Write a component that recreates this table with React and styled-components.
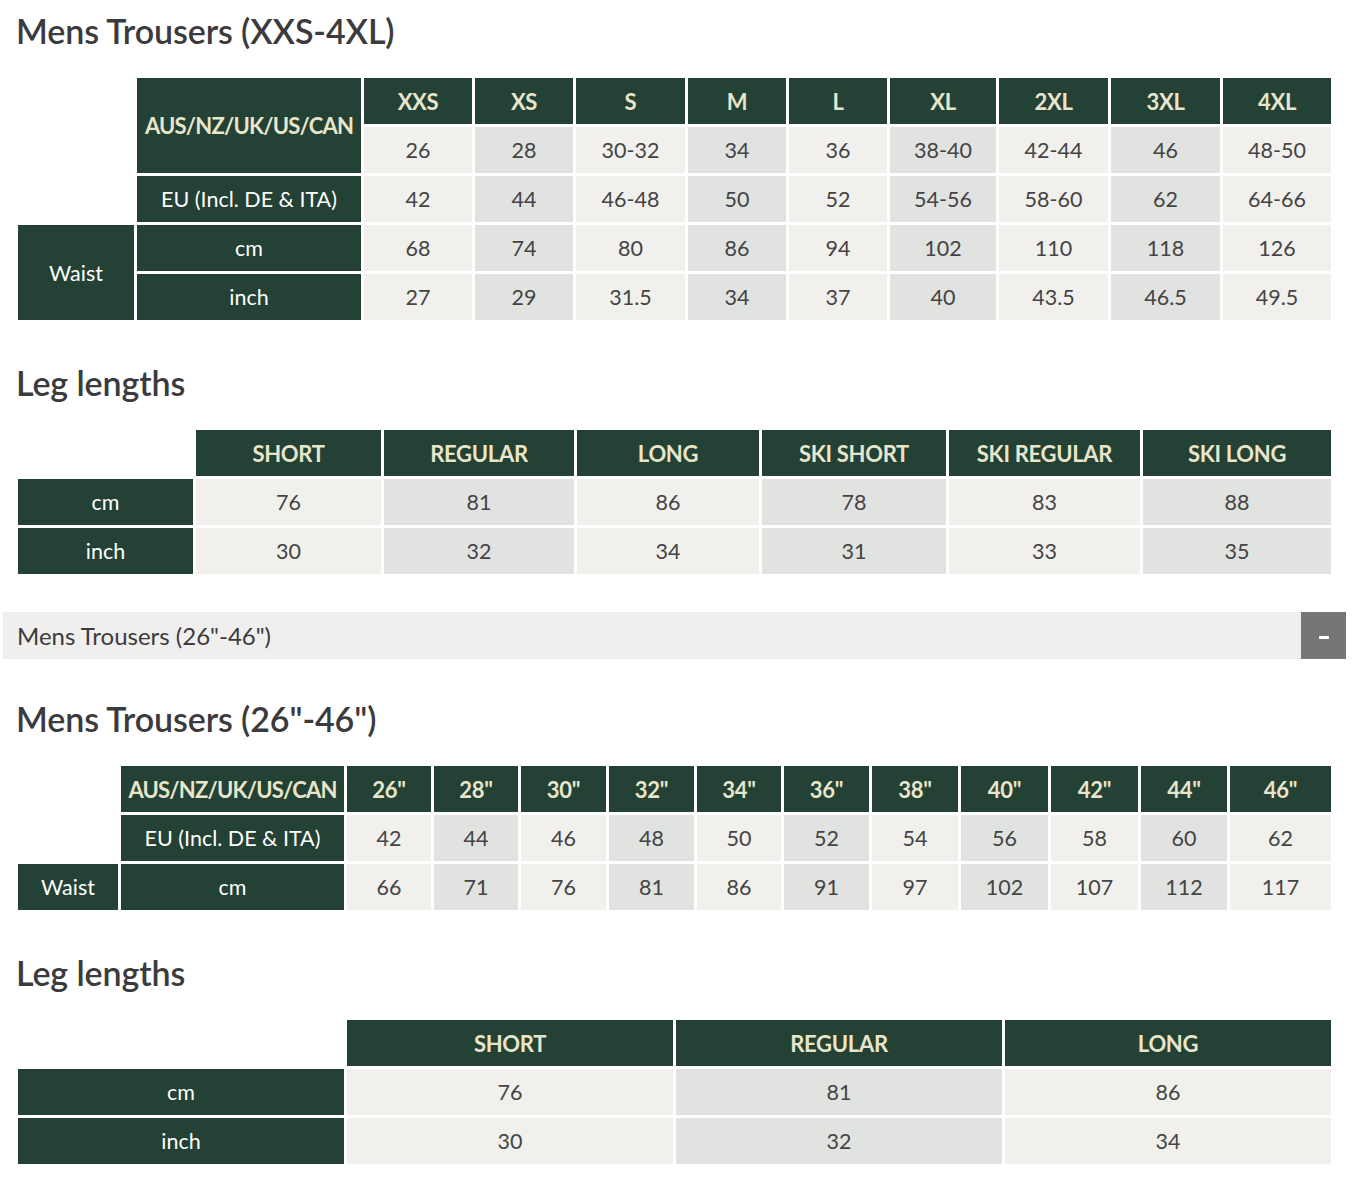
import React from "react";
import styled, { createGlobalStyle } from "styled-components";

const GlobalStyle = createGlobalStyle`
  html, body { margin: 0; padding: 0; background: #ffffff; }
  body { font-family: Lato, "Open Sans", Arial, sans-serif; color: #3b3b3d; }
`;

const GREEN = "#234134";
const CREAM = "#e9e5cb";
const LIGHT = "#f1f0ed";
const GREY = "#e0e3e0";

const Page = styled.div`
  padding: 0 11px 40px 3px;
`;

const Section = styled.section`
  padding: 0 15px;
`;

const Title = styled.h2`
  margin: ${(p) => p.$top || 0}px 0 0 -2px;
  font-size: 34px;
  line-height: 40px;
  font-weight: 600;
  color: #3b3b3d;
  letter-spacing: -0.1px;
`;

const Table = styled.table`
  table-layout: fixed;
  border-collapse: separate;
  border-spacing: 3px;
  width: calc(100% + 6px);
  margin: ${(p) => p.$top || 0}px -3px 0;
`;

const Cell = styled.td`
  height: 46px;
  padding: 0 4px;
  box-sizing: border-box;
  text-align: center;
  vertical-align: middle;
  font-size: 21.5px;
  color: #444444;
  background: ${(p) => (p.$alt ? GREY : LIGHT)};
  white-space: nowrap;
`;

const Head = styled.th`
  height: 46px;
  padding: 0 2px;
  box-sizing: border-box;
  text-align: center;
  vertical-align: middle;
  font-size: 22px;
  font-weight: 700;
  letter-spacing: ${(p) => (p.$tight ? "-0.8px" : "-0.3px")};
  color: ${CREAM};
  background: ${GREEN};
  white-space: nowrap;
`;

const Label = styled.th`
  height: 46px;
  padding: 0 4px;
  box-sizing: border-box;
  text-align: center;
  vertical-align: middle;
  font-size: 21.5px;
  font-weight: 400;
  color: #ffffff;
  background: ${GREEN};
  white-space: nowrap;
`;

const Blank = styled.td`
  background: transparent;
  padding: 0;
`;

const AccordionBar = styled.div`
  display: flex;
  align-items: stretch;
  justify-content: space-between;
  height: 47px;
  margin-top: 35px;
  background: #f0efed;
`;

const AccordionTitle = styled.span`
  display: flex;
  align-items: center;
  padding-left: 14px;
  font-size: 24px;
  color: #3b3b3d;
`;

const ToggleButton = styled.button`
  width: 45px;
  border: 0;
  padding: 0;
  background: #767676;
  display: flex;
  align-items: center;
  justify-content: center;
  cursor: pointer;
  &::before {
    content: "";
    width: 10px;
    height: 3px;
    background: #ffffff;
    margin-top: 4px;
  }
`;

const Cols = ({ widths }) => (
  <colgroup>
    {widths.map((w, i) => (
      <col key={i} style={w ? { width: w } : undefined} />
    ))}
  </colgroup>
);

const t1Sizes = ["XXS", "XS", "S", "M", "L", "XL", "2XL", "3XL", "4XL"];
const t1Aus = ["26", "28", "30-32", "34", "36", "38-40", "42-44", "46", "48-50"];
const t1Eu = ["42", "44", "46-48", "50", "52", "54-56", "58-60", "62", "64-66"];
const t1Cm = ["68", "74", "80", "86", "94", "102", "110", "118", "126"];
const t1In = ["27", "29", "31.5", "34", "37", "40", "43.5", "46.5", "49.5"];

const leg1Heads = ["SHORT", "REGULAR", "LONG", "SKI SHORT", "SKI REGULAR", "SKI LONG"];
const leg1Cm = ["76", "81", "86", "78", "83", "88"];
const leg1In = ["30", "32", "34", "31", "33", "35"];

const t3Sizes = ['26"', '28"', '30"', '32"', '34"', '36"', '38"', '40"', '42"', '44"', '46"'];
const t3Eu = ["42", "44", "46", "48", "50", "52", "54", "56", "58", "60", "62"];
const t3Cm = ["66", "71", "76", "81", "86", "91", "97", "102", "107", "112", "117"];

const leg2Heads = ["SHORT", "REGULAR", "LONG"];
const leg2Cm = ["76", "81", "86"];
const leg2In = ["30", "32", "34"];

const Values = ({ list }) =>
  list.map((v, i) => (
    <Cell key={i} $alt={i % 2 === 1}>
      {v}
    </Cell>
  ));

const Heads = ({ list }) => list.map((v, i) => <Head key={i}>{v}</Head>);

function LegTable({ heads, cm, inch, widths, top }) {
  return (
    <Table $top={top}>
      <Cols widths={widths} />
      <tbody>
        <tr>
          <Blank />
          <Heads list={heads} />
        </tr>
        <tr>
          <Label>cm</Label>
          <Values list={cm} />
        </tr>
        <tr>
          <Label>inch</Label>
          <Values list={inch} />
        </tr>
      </tbody>
    </Table>
  );
}

export default function App() {
  return (
    <Page>
      <GlobalStyle />
      <Section>
        <Title $top={11}>Mens Trousers (XXS-4XL)</Title>
        <Table $top={24}>
          <Cols widths={[116, 224, 108, 98, 109, 98, 98, 106, 109, 109, null]} />
          <tbody>
            <tr>
              <Blank rowSpan={3} />
              <Head rowSpan={2} $tight>
                AUS/NZ/UK/US/CAN
              </Head>
              <Heads list={t1Sizes} />
            </tr>
            <tr>
              <Values list={t1Aus} />
            </tr>
            <tr>
              <Label>EU (Incl. DE &amp; ITA)</Label>
              <Values list={t1Eu} />
            </tr>
            <tr>
              <Label rowSpan={2}>Waist</Label>
              <Label>cm</Label>
              <Values list={t1Cm} />
            </tr>
            <tr>
              <Label>inch</Label>
              <Values list={t1In} />
            </tr>
          </tbody>
        </Table>

        <Title $top={40}>Leg lengths</Title>
        <LegTable
          top={24}
          heads={leg1Heads}
          cm={leg1Cm}
          inch={leg1In}
          widths={[175, 185, 190, 182, 184, 191, null]}
        />
      </Section>

      <AccordionBar>
        <AccordionTitle>Mens Trousers (26"-46")</AccordionTitle>
        <ToggleButton aria-label="Collapse" />
      </AccordionBar>

      <Section>
        <Title $top={40}>Mens Trousers (26"-46")</Title>
        <Table $top={24}>
          <Cols widths={[100, 223, 84, 84, 85, 85, 84, 85, 86, 87, 87, 86, null]} />
          <tbody>
            <tr>
              <Blank rowSpan={2} />
              <Head $tight>AUS/NZ/UK/US/CAN</Head>
              <Heads list={t3Sizes} />
            </tr>
            <tr>
              <Label>EU (Incl. DE &amp; ITA)</Label>
              <Values list={t3Eu} />
            </tr>
            <tr>
              <Label>Waist</Label>
              <Label>cm</Label>
              <Values list={t3Cm} />
            </tr>
          </tbody>
        </Table>

        <Title $top={40}>Leg lengths</Title>
        <LegTable
          top={24}
          heads={leg2Heads}
          cm={leg2Cm}
          inch={leg2In}
          widths={[null, null, null, null]}
        />
      </Section>
    </Page>
  );
}
